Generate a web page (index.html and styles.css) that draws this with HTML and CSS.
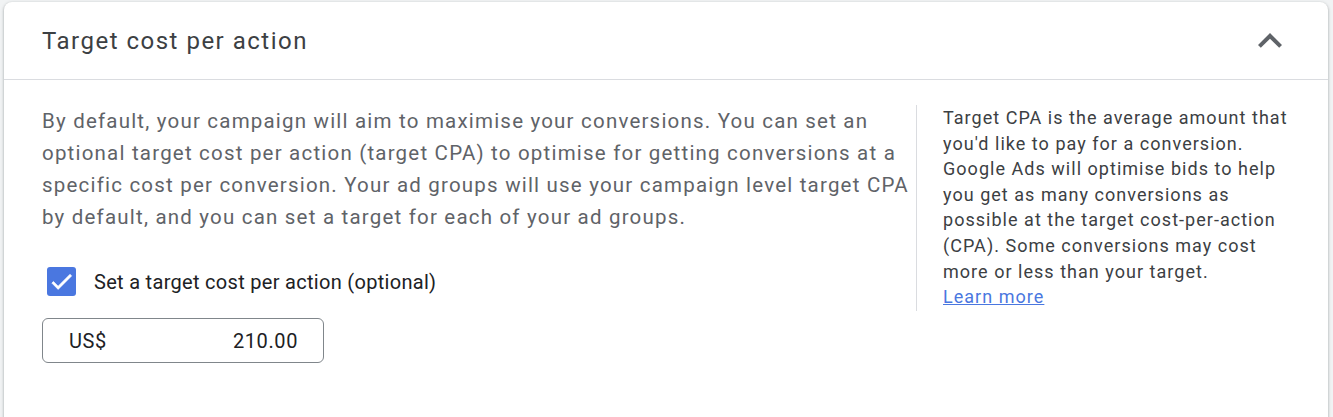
FILE: index.html
```html
<!DOCTYPE html>
<html>
<head>
<meta charset="utf-8">
<link rel="stylesheet" href="styles.css">
</head>
<body>
<div class="page">
  <div class="card">
    <div class="header">
      <div class="title">Target cost per action</div>
      <svg class="chevron" viewBox="0 0 24 24"><path d="M7.41 15.41L12 10.83l4.59 4.58L18 14l-6-6-6 6z" fill="#5f6368"/></svg>
    </div>
    <div class="body">
      <div class="main">
        <p class="desc">By default, your campaign will aim to maximise your conversions. You can set an optional target cost per action (target CPA) to optimise for getting conversions at a specific cost per conversion. Your ad groups will use your campaign level target CPA by default, and you can set a target for each of your ad groups.</p>
        <label class="check-row">
          <span class="checkbox"><svg viewBox="0 0 24 24"><path d="M9 16.17L4.83 12l-1.42 1.41L9 19 21 7l-1.41-1.41z" fill="#fff" stroke="#fff" stroke-width="0.6"/></svg></span>
          <span class="check-label">Set a target cost per action (optional)</span>
        </label>
        <div class="money">
          <span class="cur">US$</span>
          <span class="amount">210.00</span>
        </div>
      </div>
      <div class="side">
        <p class="help">Target CPA is the average amount that you'd like to pay for a conversion. Google Ads will optimise bids to help you get as many conversions as possible at the target cost-per-action (CPA). Some conversions may cost more or less than your target. <a href="#" class="link">Learn more</a></p>
      </div>
    </div>
  </div>
</div>
</body>
</html>
```
FILE: styles.css
```css
html, body {
  margin: 0;
  padding: 0;
  background: #f1f3f4;
  font-family: Roboto, "Liberation Sans", Arial, sans-serif;
  overflow: hidden;
}
.page {
  padding: 2px 5px 0 4px;
  height: 417px;
  box-sizing: border-box;
  overflow: hidden;
}
.card {
  background: #fff;
  border-radius: 8px 8px 0 0;
  box-shadow: 0 1px 2px rgba(60,64,67,0.3), 0 1px 3px 1px rgba(60,64,67,0.15);
  height: 440px;
}
.header {
  height: 77px;
  border-bottom: 1px solid #dadce0;
  display: flex;
  align-items: center;
  justify-content: space-between;
  padding: 0 34px 0 38px;
}
.title {
  font-size: 24px;
  color: #3c4043;
  letter-spacing: 1.5px;
}
.chevron {
  width: 48px;
  height: 48px;
}
.body {
  display: flex;
  padding: 25px 0 0 38px;
}
.main {
  width: 870px;
}
.desc {
  margin: 0;
  font-size: 20.5px;
  line-height: 32px;
  color: #5f6368;
  letter-spacing: 1.2px;
}
.check-row {
  display: flex;
  align-items: center;
  margin-top: 34px;
  padding-left: 5px;
}
.checkbox {
  width: 29px;
  height: 29px;
  background: #4a77e0;
  border-radius: 3px;
  display: flex;
  align-items: center;
  justify-content: center;
}
.checkbox svg {
  width: 27px;
  height: 27px;
}
.check-label {
  margin-left: 18px;
  font-size: 20px;
  color: #202124;
  letter-spacing: 0.3px;
}
.money {
  margin-top: 22px;
  height: 43px;
  border: 1px solid #80868b;
  border-radius: 6px;
  display: flex;
  align-items: center;
  justify-content: space-between;
  padding: 0 25px 0 26px;
  font-size: 20px;
  color: #202124;
  letter-spacing: 0.6px;
  width: 229px;
}
.side {
  border-left: 1px solid #dadce0;
  height: 206px;
  padding-left: 26px;
  margin-left: 4px;
}
.help {
  margin: 0;
  width: 360px;
  font-size: 18px;
  line-height: 25.6px;
  color: #3c4043;
  letter-spacing: 1.03px;
}
.link {
  display: block;
  width: max-content;
  color: #4a77e0;
  text-decoration: underline;
}
```
